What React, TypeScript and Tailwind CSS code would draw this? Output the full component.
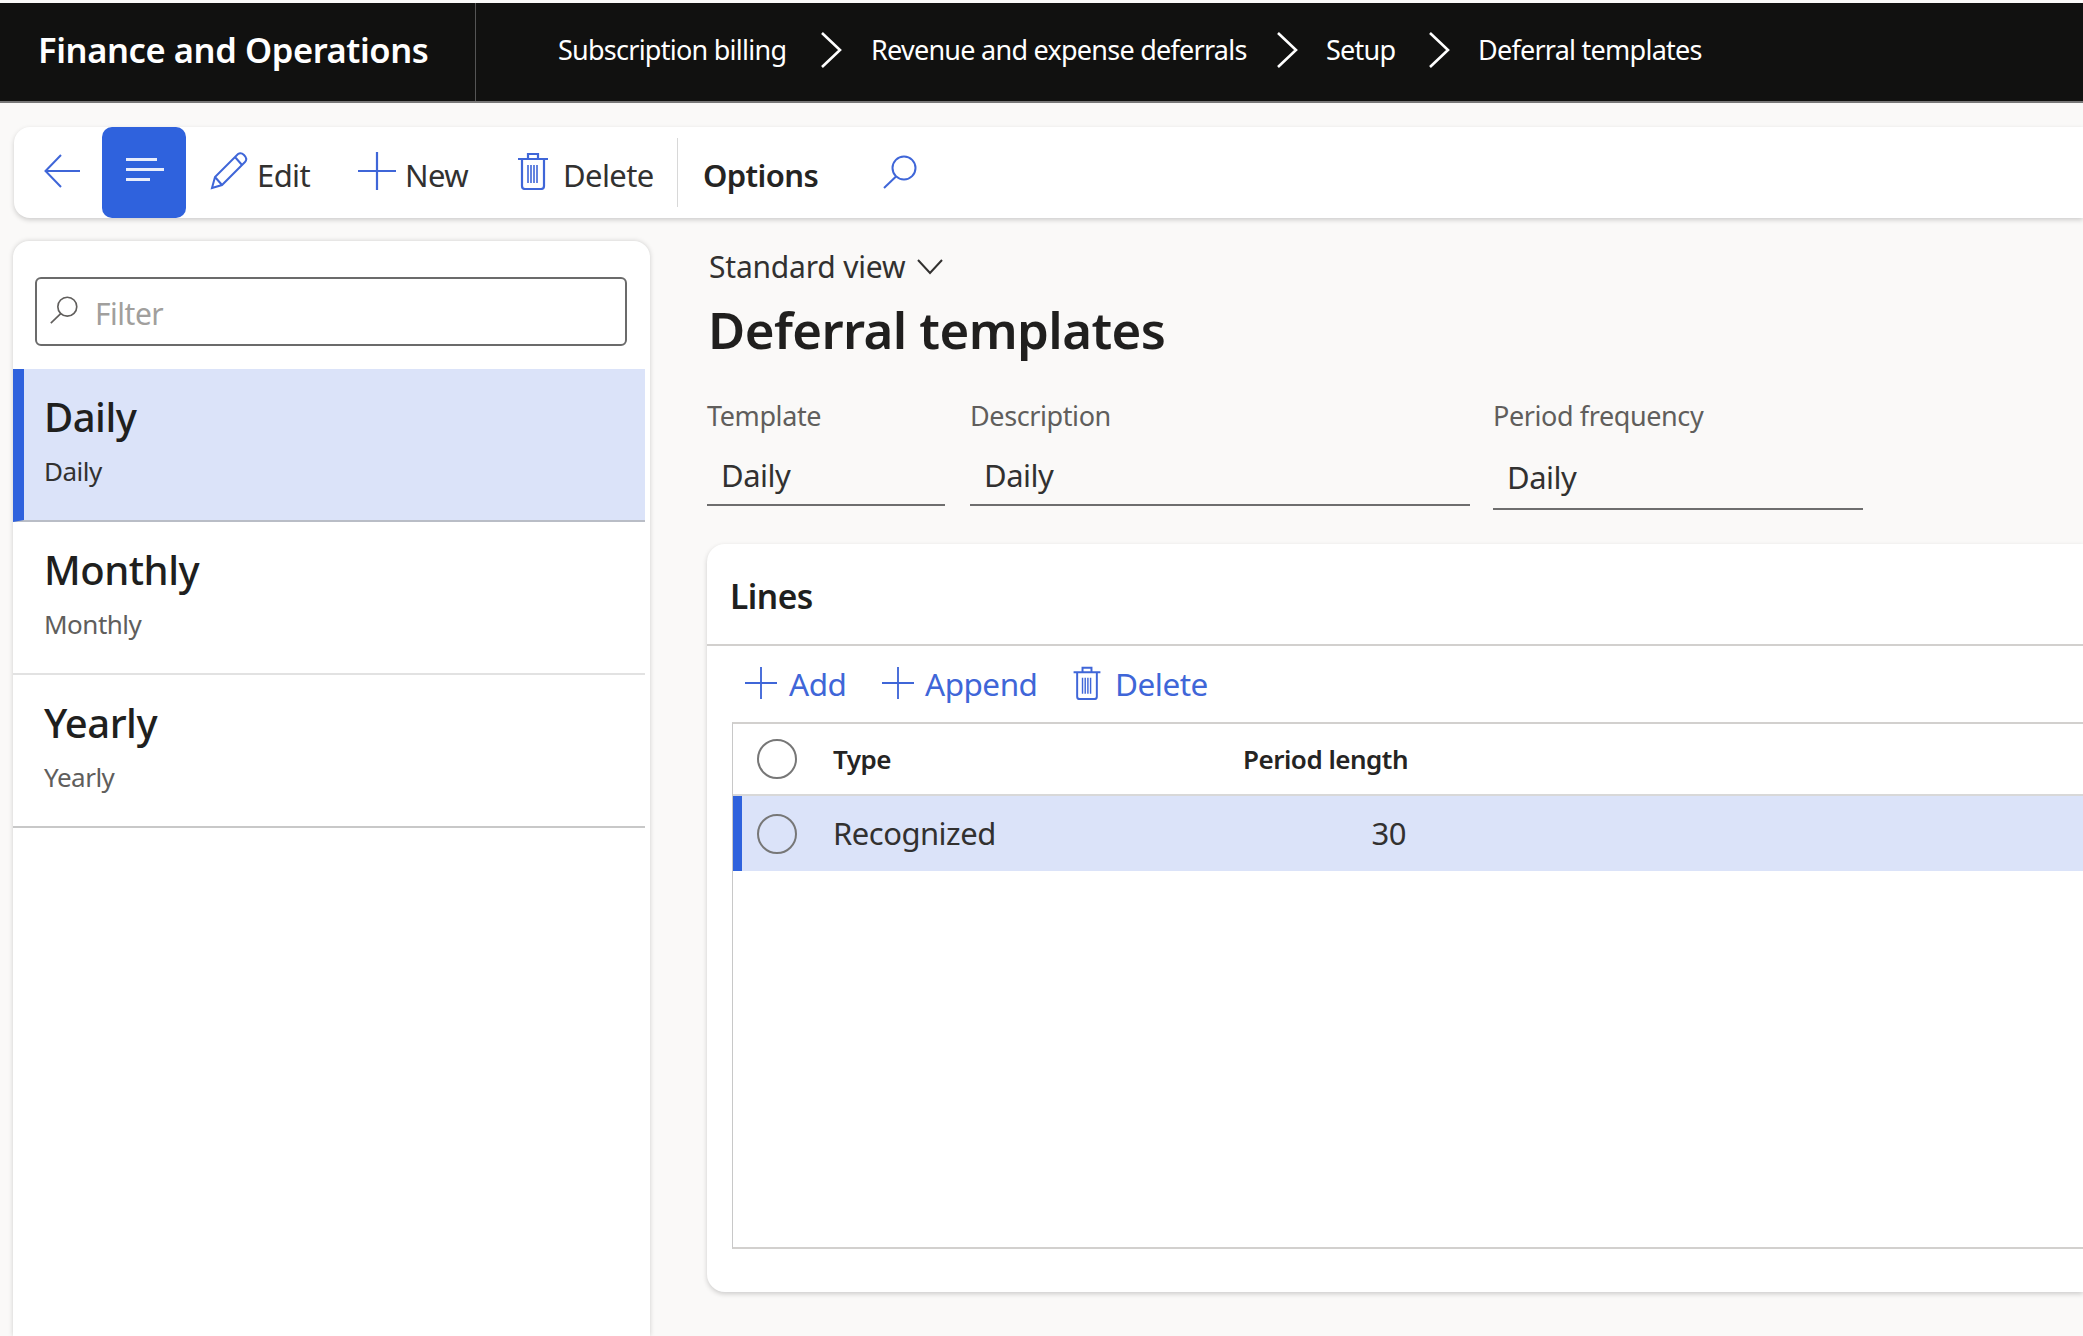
const BLUE = "#3f66d8";

function Chevron() {
  return (
    <svg width="22" height="36" viewBox="0 0 22 36" fill="none" className="shrink-0">
      <path d="M2 1 L20 18 L2 35" stroke="#fff" strokeWidth="2.6" />
    </svg>
  );
}

function BackIcon() {
  return (
    <svg width="36" height="34" viewBox="0 0 36 34" fill="none" stroke={BLUE} strokeWidth="2">
      <path d="M17 1 L1.5 17 L17 33 M2 17 H36" />
    </svg>
  );
}

function PencilIcon() {
  return (
    <svg width="38" height="38" viewBox="0 0 38 38" fill="none" stroke={BLUE} strokeWidth="2">
      <path d="M2 36 L5 25 L28 2 Q31 0 34 3 Q38 7 35 10 L12 33 Z M5 25 L12 33 M25 5 L32 13" />
    </svg>
  );
}

function PlusIcon({ size = 38 }: { size?: number }) {
  return (
    <svg width={size} height={size} viewBox="0 0 38 38" fill="none" stroke={BLUE} strokeWidth="2.2">
      <path d="M19 0 V38 M0 19 H38" />
    </svg>
  );
}

function TrashIcon({ w = 30, h = 38 }: { w?: number; h?: number }) {
  return (
    <svg width={w} height={h} viewBox="0 0 30 38" fill="none" stroke={BLUE} strokeWidth="2.2">
      <path d="M0 7 H30 M10 7 V2 H20 V7 M4 7 V34 Q4 37 7 37 H23 Q26 37 26 34 V7" />
      <path d="M10 13 V31 M13 13 V31 M16 13 V31 M19 13 V31" strokeWidth="1.6" />
    </svg>
  );
}

function SearchIcon({ size = 34, color = BLUE }: { size?: number; color?: string }) {
  return (
    <svg width={size} height={size} viewBox="0 0 34 34" fill="none" stroke={color} strokeWidth="2">
      <circle cx="21" cy="13" r="11.5" />
      <path d="M13 21.5 L1 33" />
    </svg>
  );
}

function Circle() {
  return <span className="block h-[40px] w-[40px] rounded-full border-2 border-[#777]" />;
}

function Crumb({ children, className }: { children: React.ReactNode; className: string }) {
  return <span className={"text-[27px] leading-[40px] text-white tracking-[-0.75px] " + className}>{children}</span>;
}

function ListRow({ title, active, muted }: { title: string; active?: boolean; muted?: boolean }) {
  return (
    <div
      className={
        "h-[153px] w-[632px] border-b-2 " +
        (active
          ? "bg-[#dbe3f9] border-l-[11px] border-l-[#2f62dd] pl-[20px] border-b-[#b9bdc6]"
          : muted
            ? "pl-[31px] border-b-[#c8c8c8]"
            : "pl-[31px] border-b-[#e2e2e2]")
      }
    >
      <div className="pt-[23px] text-[40px] leading-[50px] font-medium text-[#201f1e] tracking-[-0.5px]">{title}</div>
      <div className={"mt-[11px] text-[26px] leading-[36px] tracking-[-0.5px] " + (active ? "text-[#323130]" : "text-[#605e5c]")}>
        {title}
      </div>
    </div>
  );
}

function Field({ label, width, tall }: { label: string; width: string; tall?: boolean }) {
  return (
    <div className={width}>
      <div className="h-[30px] text-[27px] leading-[28px] text-[#605e5c] tracking-[-0.4px]">{label}</div>
      <div
        className={
          "border-b-2 border-[#6e6e6e] pl-[14px] text-[31px] leading-[40px] text-[#323130] tracking-[-0.5px] " +
          (tall ? "h-[78px] pt-[25px]" : "h-[74px] pt-[23px]")
        }
      >
        Daily
      </div>
    </div>
  );
}

export default function App() {
  return (
    <div
      className="h-[1336px] w-[2083px] overflow-hidden bg-[#faf9f8] pt-[3px]"
      style={{ fontFamily: '"Noto Sans", "Open Sans", sans-serif' }}
    >
      {/* header */}
      <header className="flex h-[100px] items-center border-b-2 border-b-[#777] bg-[#111110]">
        <div className="flex h-full w-[476px] shrink-0 items-center border-r border-r-[#555] pb-[5px] pl-[38px]">
          <span className="text-[34.5px] leading-[40px] font-semibold text-white tracking-[-0.4px]">Finance and Operations</span>
        </div>
        <div className="flex items-center pb-[5px] pl-[82px]">
          <Crumb className="w-[262px]">Subscription billing</Crumb>
          <Chevron />
          <Crumb className="ml-[29px] w-[405px]">Revenue and expense deferrals</Crumb>
          <Chevron />
          <Crumb className="ml-[28px] w-[102px]">Setup</Crumb>
          <Chevron />
          <Crumb className="ml-[28px]">Deferral templates</Crumb>
        </div>
      </header>

      {/* action bar */}
      <div className="mt-[24px] ml-[14px] flex h-[91px] items-center rounded-l-[16px] bg-white shadow-[0_2px_5px_rgba(0,0,0,0.18)]">
        <div className="mb-[3px] ml-[30px] w-[58px]">
          <BackIcon />
        </div>
        <div className="flex h-full w-[84px] flex-col justify-center gap-[7px] rounded-[10px] bg-[#2f62dd] pb-[6px] pl-[24px]">
          <span className="block h-[3px] w-[31px] bg-[#e8edfb]" />
          <span className="block h-[3px] w-[38px] bg-[#e8edfb]" />
          <span className="block h-[3px] w-[24px] bg-[#e8edfb]" />
        </div>
        <div className="ml-[24px] flex w-[148px] items-center pb-[4px] text-[31px] leading-[40px] text-[#323130] tracking-[-0.6px]">
          <PencilIcon />
          <span className="ml-[9px] mt-[8px]">Edit</span>
        </div>
        <div className="flex w-[160px] items-center pb-[4px] text-[31px] leading-[40px] text-[#323130] tracking-[-0.6px]">
          <PlusIcon />
          <span className="ml-[9px] mt-[8px]">New</span>
        </div>
        <div className="flex w-[159px] items-center pb-[4px] text-[31px] leading-[40px] text-[#323130] tracking-[-0.6px]">
          <TrashIcon />
          <span className="ml-[15px] mt-[8px]">Delete</span>
        </div>
        <div className="h-[69px] w-px bg-[#d8d8d8]" />
        <span className="ml-[25px] mt-[4px] w-[180px] text-[31px] leading-[40px] font-semibold text-[#252423] tracking-[-0.6px]">Options</span>
        <div className="mb-[1px]">
          <SearchIcon />
        </div>
      </div>

      <div className="mt-[23px] flex">
        {/* list panel */}
        <aside className="ml-[13px] h-[1095px] w-[637px] shrink-0 rounded-t-[16px] bg-white pt-[36px] shadow-[0_0_5px_rgba(0,0,0,0.18)]">
          <div className="ml-[22px] flex h-[69px] w-[592px] items-center rounded-[6px] border-2 border-[#6b6b6b] pl-[13px]">
            <div className="mb-[3px]">
              <SearchIcon size={28} color="#605e5c" />
            </div>
            <span className="ml-[17px] mt-[4px] text-[30px] text-[#a19f9d] tracking-[-0.5px]">Filter</span>
          </div>
          <div className="mt-[23px]">
            <ListRow title="Daily" active />
            <ListRow title="Monthly" />
            <ListRow title="Yearly" muted />
          </div>
        </aside>

        {/* details */}
        <main className="ml-[57px] flex-1 pt-[11px]">
          <div className="flex h-[30px] items-center pl-[2px] text-[30px] leading-[30px] text-[#323130] tracking-[-0.2px]">
            Standard view
            <svg width="26" height="16" viewBox="0 0 26 16" fill="none" stroke="#323130" strokeWidth="2" className="ml-[12px]">
              <path d="M1 1 L13 14 L25 1" />
            </svg>
          </div>
          <h1 className="mt-[17px] h-[60px] pl-[1px] text-[51px] leading-[60px] font-semibold text-[#201f1e] tracking-[-0.6px]">Deferral templates</h1>
          <div className="mt-[43px] flex items-start">
            <Field label="Template" width="w-[238px] mr-[25px]" />
            <Field label="Description" width="w-[500px] mr-[23px]" />
            <Field label="Period frequency" width="w-[370px]" tall />
          </div>

          <section className="mt-[34px] h-[748px] rounded-l-[18px] bg-white shadow-[0_2px_5px_rgba(0,0,0,0.18)]">
            <div className="flex h-[102px] items-center border-b-2 border-b-[#d2d0ce] pl-[23px] pt-[4px] text-[33.5px] font-semibold text-[#201f1e] tracking-[-0.5px]">
              Lines
            </div>
            <div className="flex h-[76px] items-center pl-[38px] pb-[2px] text-[31.5px] tracking-[-0.5px] text-[#3f66d8]">
              <PlusIcon size={32} />
              <span className="ml-[12px] mt-[1px] w-[93px]">Add</span>
              <PlusIcon size={32} />
              <span className="ml-[11px] mt-[1px] w-[148px]">Append</span>
              <TrashIcon w={28} h={34} />
              <span className="ml-[14px] mt-[1px]">Delete</span>
            </div>
            <div className="ml-[25px] h-[527px] border-y-2 border-l border-y-[#d2d0ce] border-l-[#c8c8c8]">
              <div className="flex h-[72px] items-center border-b-2 border-b-[#d8d8d8] text-[26px] font-semibold text-[#252423] tracking-[-0.5px]">
                <div className="ml-[24px] w-[76px]">
                  <Circle />
                </div>
                <span className="w-[371px]">Type</span>
                <span className="w-[204px] text-right">Period length</span>
              </div>
              <div className="flex h-[75px] items-center border-l-[9px] border-l-[#2f62dd] bg-[#dbe3f9] text-[31px] text-[#323130] tracking-[-0.5px]">
                <div className="ml-[15px] w-[76px]">
                  <Circle />
                </div>
                <span className="w-[371px]">Recognized</span>
                <span className="w-[202px] text-right">30</span>
              </div>
            </div>
          </section>
        </main>
      </div>
    </div>
  );
}
